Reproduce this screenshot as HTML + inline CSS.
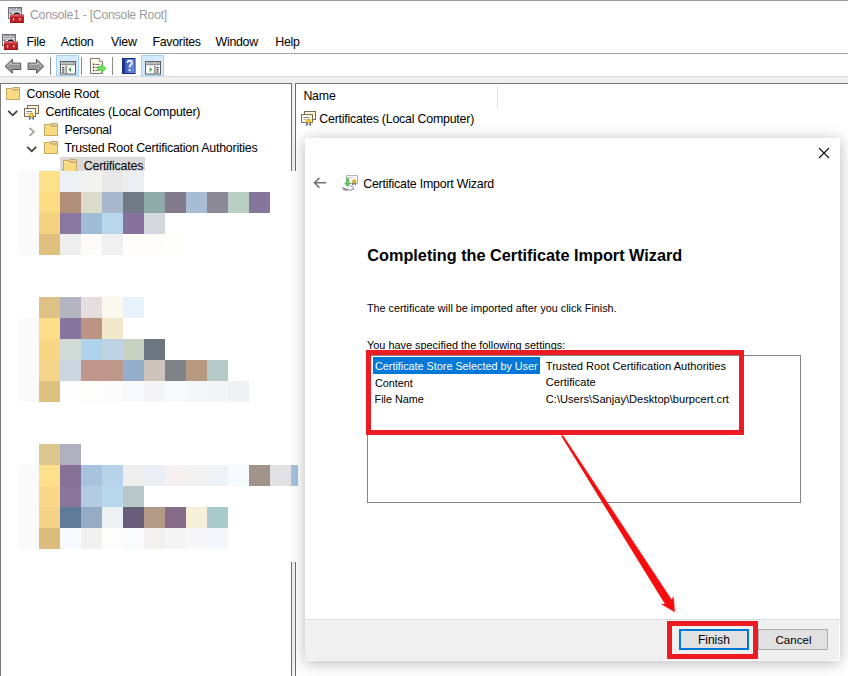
<!DOCTYPE html>
<html><head><meta charset="utf-8"><style>
html,body{margin:0;padding:0;}
body{width:848px;height:676px;position:relative;overflow:hidden;background:#fff;font-family:"Liberation Sans", sans-serif;}
.t{position:absolute;white-space:nowrap;}
.r{position:absolute;}
svg{position:absolute;overflow:visible;}
</style></head><body>
<div class="r" style="left:0px;top:0px;width:848px;height:1px;background:#a0a0a0;"></div>
<div class="t" style="left:30px;top:9.29px;font-size:12.3px;line-height:12.3px;color:#9c9c9c;font-weight:400;letter-spacing:-0.29px;">Console1 - [Console Root]</div>
<div class="t" style="left:26.5px;top:35.50px;font-size:12.4px;line-height:12.4px;color:#000;font-weight:400;letter-spacing:-0.3px;">File</div>
<div class="t" style="left:60.7px;top:35.50px;font-size:12.4px;line-height:12.4px;color:#000;font-weight:400;letter-spacing:-0.3px;">Action</div>
<div class="t" style="left:111.1px;top:35.50px;font-size:12.4px;line-height:12.4px;color:#000;font-weight:400;letter-spacing:-0.3px;">View</div>
<div class="t" style="left:152.5px;top:35.50px;font-size:12.4px;line-height:12.4px;color:#000;font-weight:400;letter-spacing:-0.3px;">Favorites</div>
<div class="t" style="left:215.6px;top:35.50px;font-size:12.4px;line-height:12.4px;color:#000;font-weight:400;letter-spacing:-0.3px;">Window</div>
<div class="t" style="left:275.3px;top:35.50px;font-size:12.4px;line-height:12.4px;color:#000;font-weight:400;letter-spacing:-0.3px;">Help</div>
<div class="r" style="left:0px;top:53px;width:848px;height:1px;background:#a5a5a5;"></div>
<div class="r" style="left:0px;top:76px;width:848px;height:1px;background:#dadada;"></div>
<div class="r" style="left:0px;top:77px;width:848px;height:6px;background:#f0f0f0;"></div>
<div class="r" style="left:0px;top:83px;width:848px;height:1px;background:#747474;"></div>
<div class="r" style="left:0px;top:83px;width:1px;height:593px;background:#7a7a7a;"></div>
<div class="r" style="left:292px;top:83px;width:3px;height:88px;background:#f0f0f2;"></div>
<div class="r" style="left:292px;top:562px;width:3px;height:114px;background:#f0f0f2;"></div>
<div class="r" style="left:291px;top:83px;width:1px;height:88px;background:#6e6e6e;"></div>
<div class="r" style="left:295px;top:83px;width:1px;height:88px;background:#6e6e6e;"></div>
<div class="r" style="left:291px;top:562px;width:1px;height:114px;background:#6e6e6e;"></div>
<div class="r" style="left:295px;top:562px;width:1px;height:114px;background:#6e6e6e;"></div>
<div class="r" style="left:497px;top:86px;width:1px;height:22px;background:#e5e5e5;"></div>
<div class="r" style="left:56px;top:55px;width:23px;height:21px;background:#d3ebfc;box-shadow:inset 0 0 0 1px #a4d3f6;"></div>
<div class="r" style="left:141px;top:55px;width:23px;height:21px;background:#d3ebfc;box-shadow:inset 0 0 0 1px #a4d3f6;"></div>
<div class="r" style="left:50px;top:57px;width:1px;height:18px;background:#8a8a8a;"></div>
<div class="r" style="left:81px;top:57px;width:1px;height:18px;background:#8a8a8a;"></div>
<div class="r" style="left:112px;top:57px;width:1px;height:18px;background:#8a8a8a;"></div>
<div class="t" style="left:26.6px;top:87.50px;font-size:12.4px;line-height:12.4px;color:#000;font-weight:400;letter-spacing:-0.22px;">Console Root</div>
<div class="t" style="left:45.5px;top:105.50px;font-size:12.4px;line-height:12.4px;color:#000;font-weight:400;letter-spacing:-0.22px;">Certificates (Local Computer)</div>
<div class="t" style="left:64.4px;top:123.50px;font-size:12.4px;line-height:12.4px;color:#000;font-weight:400;letter-spacing:-0.22px;">Personal</div>
<div class="t" style="left:64.4px;top:141.50px;font-size:12.4px;line-height:12.4px;color:#000;font-weight:400;letter-spacing:-0.22px;">Trusted Root Certification Authorities</div>
<div class="r" style="left:60px;top:157px;width:85px;height:14px;background:#d9d9d9;"></div>
<div class="t" style="left:83.8px;top:159.50px;font-size:12.4px;line-height:12.4px;color:#000;font-weight:400;letter-spacing:-0.22px;">Certificates</div>
<div class="t" style="left:303.4px;top:90.10px;font-size:12.4px;line-height:12.4px;color:#000;font-weight:400;letter-spacing:-0.22px;">Name</div>
<div class="t" style="left:319.3px;top:112.70px;font-size:12.4px;line-height:12.4px;color:#000;font-weight:400;letter-spacing:-0.22px;">Certificates (Local Computer)</div>
<svg style="left:0;top:0" width="848" height="676" viewBox="0 0 848 676"><g transform="translate(0,0)">
<rect x="8.5" y="7.5" width="13" height="11" fill="#fff" stroke="#70707a" stroke-width="1"/>
<rect x="9" y="8" width="12" height="1.6" fill="#d4d4dc"/>
<rect x="9.5" y="8.3" width="6.5" height="1" fill="#8a8a96"/>
<rect x="17.5" y="8.2" width="1.2" height="1.2" fill="#55555f"/><rect x="19.5" y="8.2" width="1.2" height="1.2" fill="#55555f"/>
<rect x="9" y="9.8" width="12" height="0.8" fill="#70707a"/>
<rect x="9" y="10.8" width="12" height="1" fill="#c8c8d4"/>
<rect x="9" y="12" width="12" height="0.6" fill="#9a9aa6"/>
<rect x="9.6" y="12.8" width="1.2" height="1.2" fill="#333"/>
<rect x="11.6" y="12.2" width="0.7" height="6" fill="#70707a"/>
<path d="M13.6,14.8 Q16.8,11.6 20,14.8" fill="none" stroke="#111" stroke-width="1.5"/>
<rect x="10" y="14.6" width="14" height="8.4" rx="0.6" fill="#bb2228"/>
<rect x="10.3" y="14.8" width="13.4" height="1.6" fill="#d85a60"/>
<rect x="12.9" y="18.2" width="1.3" height="2.2" fill="#f6d8b0"/>
<rect x="19.1" y="18.2" width="1.3" height="2.2" fill="#f6d8b0"/>
<rect x="10" y="22.2" width="14" height="0.8" fill="#8e1519"/>
</g><g transform="translate(-6,27)">
<rect x="8.5" y="7.5" width="13" height="11" fill="#fff" stroke="#70707a" stroke-width="1"/>
<rect x="9" y="8" width="12" height="1.6" fill="#d4d4dc"/>
<rect x="9.5" y="8.3" width="6.5" height="1" fill="#8a8a96"/>
<rect x="17.5" y="8.2" width="1.2" height="1.2" fill="#55555f"/><rect x="19.5" y="8.2" width="1.2" height="1.2" fill="#55555f"/>
<rect x="9" y="9.8" width="12" height="0.8" fill="#70707a"/>
<rect x="9" y="10.8" width="12" height="1" fill="#c8c8d4"/>
<rect x="9" y="12" width="12" height="0.6" fill="#9a9aa6"/>
<rect x="9.6" y="12.8" width="1.2" height="1.2" fill="#333"/>
<rect x="11.6" y="12.2" width="0.7" height="6" fill="#70707a"/>
<path d="M13.6,14.8 Q16.8,11.6 20,14.8" fill="none" stroke="#111" stroke-width="1.5"/>
<rect x="10" y="14.6" width="14" height="8.4" rx="0.6" fill="#bb2228"/>
<rect x="10.3" y="14.8" width="13.4" height="1.6" fill="#d85a60"/>
<rect x="12.9" y="18.2" width="1.3" height="2.2" fill="#f6d8b0"/>
<rect x="19.1" y="18.2" width="1.3" height="2.2" fill="#f6d8b0"/>
<rect x="10" y="22.2" width="14" height="0.8" fill="#8e1519"/>
</g><path d="M5,66.4 L12.3,59.3 L12.3,63.1 L20.7,63.1 L20.7,69.5 L12.3,69.5 L12.3,73.3 Z" fill="#979797" stroke="#555" stroke-width="1" stroke-linejoin="round"/><path d="M7,66.4 L11.2,62.3 L11.2,64.2 L19.5,64.2" fill="none" stroke="#d5d5d5" stroke-width="0.8"/><g transform="translate(48.8,0) scale(-1,1)"><path d="M5,66.4 L12.3,59.3 L12.3,63.1 L20.7,63.1 L20.7,69.5 L12.3,69.5 L12.3,73.3 Z" fill="#979797" stroke="#555" stroke-width="1" stroke-linejoin="round"/><path d="M7,66.4 L11.2,62.3 L11.2,64.2 L19.5,64.2" fill="none" stroke="#d5d5d5" stroke-width="0.8"/></g><rect x="60.5" y="61.5" width="15" height="12.5" fill="#fff" stroke="#5f5f5f" stroke-width="1"/>
<rect x="61" y="62" width="14" height="2" fill="#e6e6e6"/>
<rect x="61.8" y="62.5" width="8.5" height="1" fill="#8a8a8a"/>
<rect x="71.3" y="62.4" width="1.2" height="1.2" fill="#5a5a5a"/><rect x="73.1" y="62.4" width="1.2" height="1.2" fill="#5a5a5a"/>
<rect x="61" y="64" width="14" height="0.8" fill="#6a6a6a"/>
<rect x="61" y="64.8" width="14" height="0.7" fill="#d0d0d0"/>
<rect x="62" y="67" width="2.4" height="1.3" fill="#444"/><rect x="62" y="69.2" width="2.4" height="1.3" fill="#444"/><rect x="62" y="71.4" width="2.4" height="1.3" fill="#444"/><rect x="65.6" y="65.5" width="1" height="8.5" fill="#5a5a5a"/><path d="M68.3,69.6 L71,67.2 L71,72 Z" fill="#3c9e3a"/><path d="M90.5,58.5 H99.5 L102.5,61.5 V73.5 H90.5 Z" fill="#fdf8e6" stroke="#777" stroke-width="1"/>
<path d="M99.5,58.5 V61.5 H102.5" fill="#fff" stroke="#888" stroke-width="0.8"/>
<circle cx="93.6" cy="64.4" r="0.8" fill="#333"/><circle cx="93.6" cy="67.4" r="0.8" fill="#333"/><circle cx="93.6" cy="70.5" r="0.8" fill="#333"/>
<rect x="95.2" y="64" width="4.5" height="0.9" fill="#7a6a7a"/><rect x="95.2" y="67" width="3" height="0.9" fill="#7a6a7a"/><rect x="95.2" y="70" width="3" height="0.9" fill="#7a6a7a"/>
<path d="M98,66.5 H101.8 V64.3 L106,68.5 L101.8,72.5 V70.3 H98 Z" fill="#6ee05a" stroke="#3cb030" stroke-width="0.7"/><defs><linearGradient id="hg" x1="0" x2="1"><stop offset="0" stop-color="#2c4bb0"/><stop offset="1" stop-color="#6f93ea"/></linearGradient></defs>
<rect x="122.5" y="58.5" width="12.5" height="15" fill="url(#hg)" stroke="#1c2c86" stroke-width="1"/>
<rect x="123" y="59" width="2" height="14" fill="#1f3590"/>
<path d="M127.3,62.8 Q127.5,60.6 129.6,60.6 Q131.8,60.7 131.8,62.8 Q131.8,64.3 130.4,65.2 Q129.5,65.9 129.5,67.6" fill="none" stroke="#fff" stroke-width="1.7"/>
<rect x="128.6" y="69.2" width="1.9" height="1.9" fill="#fff"/><rect x="145.5" y="61.5" width="15" height="12.5" fill="#fff" stroke="#5f5f5f" stroke-width="1"/>
<rect x="146" y="62" width="14" height="2" fill="#e6e6e6"/>
<rect x="146.8" y="62.5" width="8.5" height="1" fill="#8a8a8a"/>
<rect x="156.3" y="62.4" width="1.2" height="1.2" fill="#5a5a5a"/><rect x="158.1" y="62.4" width="1.2" height="1.2" fill="#5a5a5a"/>
<rect x="146" y="64" width="14" height="0.8" fill="#6a6a6a"/>
<rect x="146" y="64.8" width="14" height="0.7" fill="#d0d0d0"/>
<rect x="156.3" y="67" width="2.4" height="1.3" fill="#444"/><rect x="156.3" y="69.2" width="2.4" height="1.3" fill="#444"/><rect x="156.3" y="71.4" width="2.4" height="1.3" fill="#444"/><rect x="154.4" y="65.5" width="1" height="8.5" fill="#5a5a5a"/><path d="M149.6,67.2 L152.3,69.6 L149.6,72 Z" fill="#3c9e3a"/><g transform="translate(6,87)">
<path d="M6.8,0.5 H13.5 V3 H6.8 Z" fill="#efd7a0" stroke="#bfa66a" stroke-width="1"/>
<path d="M0.5,1.5 H5.5 L7,3.2 H13.5 V12.5 H0.5 Z" fill="#fadf8f" stroke="#c2a862" stroke-width="1"/>
<rect x="1.2" y="4" width="11.6" height="8" fill="#f9da80"/>
</g><g transform="translate(0,0)">
<rect x="27.5" y="105.5" width="11" height="8" fill="#fdf5da" stroke="#7d6c5a" stroke-width="1"/>
<rect x="24.5" y="108.5" width="11" height="8" fill="#fffbea" stroke="#7d6c5a" stroke-width="1"/>
<rect x="26.5" y="111" width="5.5" height="1" fill="#7a7f9a"/>
<rect x="26.5" y="113" width="2.5" height="0.8" fill="#a0a4b8"/>
<path d="M29.6,116.5 L29,120 L30.6,119 L31,116.5 Z M32.3,116.5 L32.7,120 L34,119 L33.5,116.5 Z" fill="#24408f"/>
<circle cx="31.5" cy="115.2" r="2.4" fill="#e0a416"/>
<circle cx="31.5" cy="115" r="1.2" fill="#f7d04a"/>
</g><g transform="translate(44,123)">
<path d="M6.8,0.5 H13.5 V3 H6.8 Z" fill="#efd7a0" stroke="#bfa66a" stroke-width="1"/>
<path d="M0.5,1.5 H5.5 L7,3.2 H13.5 V12.5 H0.5 Z" fill="#fadf8f" stroke="#c2a862" stroke-width="1"/>
<rect x="1.2" y="4" width="11.6" height="8" fill="#f9da80"/>
</g><g transform="translate(44,141)">
<path d="M6.8,0.5 H13.5 V3 H6.8 Z" fill="#efd7a0" stroke="#bfa66a" stroke-width="1"/>
<path d="M0.5,1.5 H5.5 L7,3.2 H13.5 V12.5 H0.5 Z" fill="#fadf8f" stroke="#c2a862" stroke-width="1"/>
<rect x="1.2" y="4" width="11.6" height="8" fill="#f9da80"/>
</g><g transform="translate(63,159)">
<path d="M6.8,0.5 H13.5 V3 H6.8 Z" fill="#efd7a0" stroke="#bfa66a" stroke-width="1"/>
<path d="M0.5,1.5 H5.5 L7,3.2 H13.5 V12.5 H0.5 Z" fill="#fadf8f" stroke="#c2a862" stroke-width="1"/>
<rect x="1.2" y="4" width="11.6" height="8" fill="#f9da80"/>
</g><path d="M8.2,110.8 L12.7,115.3 L17.2,110.8" fill="none" stroke="#404040" stroke-width="1.8"/><path d="M29.5,127.8 L34.0,131.8 L29.5,135.8" fill="none" stroke="#a0a0a0" stroke-width="1.7"/><path d="M27.2,146.8 L31.7,151.3 L36.2,146.8" fill="none" stroke="#404040" stroke-width="1.8"/><g transform="translate(277,6)">
<rect x="27.5" y="105.5" width="11" height="8" fill="#fdf5da" stroke="#7d6c5a" stroke-width="1"/>
<rect x="24.5" y="108.5" width="11" height="8" fill="#fffbea" stroke="#7d6c5a" stroke-width="1"/>
<rect x="26.5" y="111" width="5.5" height="1" fill="#7a7f9a"/>
<rect x="26.5" y="113" width="2.5" height="0.8" fill="#a0a4b8"/>
<path d="M29.6,116.5 L29,120 L30.6,119 L31,116.5 Z M32.3,116.5 L32.7,120 L34,119 L33.5,116.5 Z" fill="#24408f"/>
<circle cx="31.5" cy="115.2" r="2.4" fill="#e0a416"/>
<circle cx="31.5" cy="115" r="1.2" fill="#f7d04a"/>
</g></svg>
<div class="r" style="left:18px;top:171px;width:21px;height:21px;background:#fafafa;"></div>
<div class="r" style="left:18px;top:192px;width:21px;height:21px;background:#fafafa;"></div>
<div class="r" style="left:18px;top:213px;width:21px;height:21px;background:#fafafa;"></div>
<div class="r" style="left:18px;top:234px;width:21px;height:21px;background:#fafafa;"></div>
<div class="r" style="left:18px;top:318px;width:21px;height:21px;background:#fafafa;"></div>
<div class="r" style="left:18px;top:339px;width:21px;height:21px;background:#fafafa;"></div>
<div class="r" style="left:18px;top:360px;width:21px;height:21px;background:#fafafa;"></div>
<div class="r" style="left:18px;top:381px;width:21px;height:21px;background:#fafafa;"></div>
<div class="r" style="left:18px;top:465px;width:21px;height:21px;background:#fafafa;"></div>
<div class="r" style="left:18px;top:486px;width:21px;height:21px;background:#fafafa;"></div>
<div class="r" style="left:18px;top:507px;width:21px;height:21px;background:#fafafa;"></div>
<div class="r" style="left:18px;top:528px;width:21px;height:21px;background:#fafafa;"></div>
<div class="r" style="left:39px;top:171px;width:21px;height:21px;background:#fde08a;"></div>
<div class="r" style="left:60px;top:171px;width:21px;height:21px;background:#edf2f6;"></div>
<div class="r" style="left:81px;top:171px;width:21px;height:21px;background:#f5f3f0;"></div>
<div class="r" style="left:102px;top:171px;width:21px;height:21px;background:#e9e9ea;"></div>
<div class="r" style="left:123px;top:171px;width:21px;height:21px;background:#eceff2;"></div>
<div class="r" style="left:39px;top:192px;width:21px;height:21px;background:#fcdb85;"></div>
<div class="r" style="left:60px;top:192px;width:21px;height:21px;background:#b08e7a;"></div>
<div class="r" style="left:81px;top:192px;width:21px;height:21px;background:#dcdccb;"></div>
<div class="r" style="left:102px;top:192px;width:21px;height:21px;background:#a8b8cc;"></div>
<div class="r" style="left:123px;top:192px;width:21px;height:21px;background:#6f7a85;"></div>
<div class="r" style="left:144px;top:192px;width:21px;height:21px;background:#8eaaa8;"></div>
<div class="r" style="left:165px;top:192px;width:21px;height:21px;background:#817b8c;"></div>
<div class="r" style="left:186px;top:192px;width:21px;height:21px;background:#a7bdd3;"></div>
<div class="r" style="left:207px;top:192px;width:21px;height:21px;background:#8c8a96;"></div>
<div class="r" style="left:228px;top:192px;width:21px;height:21px;background:#b9cfc3;"></div>
<div class="r" style="left:249px;top:192px;width:21px;height:21px;background:#86769a;"></div>
<div class="r" style="left:39px;top:213px;width:21px;height:21px;background:#f6d17f;"></div>
<div class="r" style="left:60px;top:213px;width:21px;height:21px;background:#8a77a0;"></div>
<div class="r" style="left:81px;top:213px;width:21px;height:21px;background:#9fbdd6;"></div>
<div class="r" style="left:102px;top:213px;width:21px;height:21px;background:#b8d6ec;"></div>
<div class="r" style="left:123px;top:213px;width:21px;height:21px;background:#86729c;"></div>
<div class="r" style="left:144px;top:213px;width:21px;height:21px;background:#d5d8df;"></div>
<div class="r" style="left:39px;top:234px;width:21px;height:21px;background:#dfc07f;"></div>
<div class="r" style="left:60px;top:234px;width:21px;height:21px;background:#eeeeef;"></div>
<div class="r" style="left:81px;top:234px;width:21px;height:21px;background:#fdfbf7;"></div>
<div class="r" style="left:102px;top:234px;width:21px;height:21px;background:#f0f0f2;"></div>
<div class="r" style="left:123px;top:234px;width:21px;height:21px;background:#fefdf9;"></div>
<div class="r" style="left:144px;top:234px;width:21px;height:21px;background:#fefdf7;"></div>
<div class="r" style="left:165px;top:234px;width:21px;height:21px;background:#fefefa;"></div>
<div class="r" style="left:39px;top:297px;width:21px;height:21px;background:#dcc385;"></div>
<div class="r" style="left:60px;top:297px;width:21px;height:21px;background:#b5b5c2;"></div>
<div class="r" style="left:81px;top:297px;width:21px;height:21px;background:#e6dede;"></div>
<div class="r" style="left:102px;top:297px;width:21px;height:21px;background:#fbf9ee;"></div>
<div class="r" style="left:123px;top:297px;width:21px;height:21px;background:#e8f2fa;"></div>
<div class="r" style="left:39px;top:318px;width:21px;height:21px;background:#fdde88;"></div>
<div class="r" style="left:60px;top:318px;width:21px;height:21px;background:#86769d;"></div>
<div class="r" style="left:81px;top:318px;width:21px;height:21px;background:#bb9484;"></div>
<div class="r" style="left:102px;top:318px;width:21px;height:21px;background:#f2e8cb;"></div>
<div class="r" style="left:39px;top:339px;width:21px;height:21px;background:#f8d683;"></div>
<div class="r" style="left:60px;top:339px;width:21px;height:21px;background:#d2dcd9;"></div>
<div class="r" style="left:81px;top:339px;width:21px;height:21px;background:#b0d3ec;"></div>
<div class="r" style="left:102px;top:339px;width:21px;height:21px;background:#bfd2e4;"></div>
<div class="r" style="left:123px;top:339px;width:21px;height:21px;background:#c7d2c2;"></div>
<div class="r" style="left:144px;top:339px;width:21px;height:21px;background:#6d7580;"></div>
<div class="r" style="left:39px;top:360px;width:21px;height:21px;background:#f4d38a;"></div>
<div class="r" style="left:60px;top:360px;width:21px;height:21px;background:#ccd6e0;"></div>
<div class="r" style="left:81px;top:360px;width:21px;height:21px;background:#be968a;"></div>
<div class="r" style="left:102px;top:360px;width:21px;height:21px;background:#be968a;"></div>
<div class="r" style="left:123px;top:360px;width:21px;height:21px;background:#93aecb;"></div>
<div class="r" style="left:144px;top:360px;width:21px;height:21px;background:#cdc4bb;"></div>
<div class="r" style="left:165px;top:360px;width:21px;height:21px;background:#80828a;"></div>
<div class="r" style="left:186px;top:360px;width:21px;height:21px;background:#b89a82;"></div>
<div class="r" style="left:207px;top:360px;width:21px;height:21px;background:#b5cac6;"></div>
<div class="r" style="left:39px;top:381px;width:21px;height:21px;background:#dcc07e;"></div>
<div class="r" style="left:60px;top:381px;width:21px;height:21px;background:#fefefe;"></div>
<div class="r" style="left:81px;top:381px;width:21px;height:21px;background:#fdfdfb;"></div>
<div class="r" style="left:102px;top:381px;width:21px;height:21px;background:#fcfcfd;"></div>
<div class="r" style="left:123px;top:381px;width:21px;height:21px;background:#f8f9fc;"></div>
<div class="r" style="left:144px;top:381px;width:21px;height:21px;background:#f5f5f7;"></div>
<div class="r" style="left:165px;top:381px;width:21px;height:21px;background:#f9fafc;"></div>
<div class="r" style="left:186px;top:381px;width:21px;height:21px;background:#f5f6f8;"></div>
<div class="r" style="left:207px;top:381px;width:21px;height:21px;background:#f4f5f7;"></div>
<div class="r" style="left:228px;top:381px;width:21px;height:21px;background:#f0f1f3;"></div>
<div class="r" style="left:39px;top:444px;width:21px;height:21px;background:#dcc78e;"></div>
<div class="r" style="left:60px;top:444px;width:21px;height:21px;background:#b0afbf;"></div>
<div class="r" style="left:39px;top:465px;width:21px;height:21px;background:#fde08a;"></div>
<div class="r" style="left:60px;top:465px;width:21px;height:21px;background:#877198;"></div>
<div class="r" style="left:81px;top:465px;width:21px;height:21px;background:#a6c2dc;"></div>
<div class="r" style="left:102px;top:465px;width:21px;height:21px;background:#b6d3e9;"></div>
<div class="r" style="left:123px;top:465px;width:21px;height:21px;background:#eeeeee;"></div>
<div class="r" style="left:144px;top:465px;width:21px;height:21px;background:#ebeef5;"></div>
<div class="r" style="left:165px;top:465px;width:21px;height:21px;background:#f6f1f0;"></div>
<div class="r" style="left:186px;top:465px;width:21px;height:21px;background:#f2f2f2;"></div>
<div class="r" style="left:207px;top:465px;width:21px;height:21px;background:#eef3f5;"></div>
<div class="r" style="left:228px;top:465px;width:21px;height:21px;background:#f5fafd;"></div>
<div class="r" style="left:249px;top:465px;width:21px;height:21px;background:#a0938a;"></div>
<div class="r" style="left:270px;top:465px;width:21px;height:21px;background:#e2e2e6;"></div>
<div class="r" style="left:291px;top:465px;width:7px;height:21px;background:#a4c2dc;"></div>
<div class="r" style="left:39px;top:486px;width:21px;height:21px;background:#fbd887;"></div>
<div class="r" style="left:60px;top:486px;width:21px;height:21px;background:#8a759c;"></div>
<div class="r" style="left:81px;top:486px;width:21px;height:21px;background:#b3cce2;"></div>
<div class="r" style="left:102px;top:486px;width:21px;height:21px;background:#b9d8ee;"></div>
<div class="r" style="left:123px;top:486px;width:21px;height:21px;background:#b6c8c9;"></div>
<div class="r" style="left:39px;top:507px;width:21px;height:21px;background:#f5d285;"></div>
<div class="r" style="left:60px;top:507px;width:21px;height:21px;background:#5f7a9b;"></div>
<div class="r" style="left:81px;top:507px;width:21px;height:21px;background:#98abc4;"></div>
<div class="r" style="left:102px;top:507px;width:21px;height:21px;background:#edf1f4;"></div>
<div class="r" style="left:123px;top:507px;width:21px;height:21px;background:#675e79;"></div>
<div class="r" style="left:144px;top:507px;width:21px;height:21px;background:#b39a86;"></div>
<div class="r" style="left:165px;top:507px;width:21px;height:21px;background:#866b88;"></div>
<div class="r" style="left:186px;top:507px;width:21px;height:21px;background:#f6f0d9;"></div>
<div class="r" style="left:207px;top:507px;width:21px;height:21px;background:#a9cacb;"></div>
<div class="r" style="left:39px;top:528px;width:21px;height:21px;background:#dbbc7c;"></div>
<div class="r" style="left:60px;top:528px;width:21px;height:21px;background:#f7f9fc;"></div>
<div class="r" style="left:81px;top:528px;width:21px;height:21px;background:#f1f1f2;"></div>
<div class="r" style="left:102px;top:528px;width:21px;height:21px;background:#fdfdfc;"></div>
<div class="r" style="left:123px;top:528px;width:21px;height:21px;background:#fafbfc;"></div>
<div class="r" style="left:144px;top:528px;width:21px;height:21px;background:#f3f2f1;"></div>
<div class="r" style="left:165px;top:528px;width:21px;height:21px;background:#f5f5f5;"></div>
<div class="r" style="left:186px;top:528px;width:21px;height:21px;background:#f7f7f9;"></div>
<div class="r" style="left:207px;top:528px;width:21px;height:21px;background:#f5f7fa;"></div>
<div class="r" style="left:305px;top:138px;width:535px;height:523px;background:#fff;box-shadow:0 2px 14px rgba(0,0,0,0.28);"></div>
<div class="r" style="left:305px;top:619px;width:535px;height:42px;background:#f0f0f0;"></div>
<div class="r" style="left:305px;top:619px;width:535px;height:1px;background:#dcdcdc;"></div>
<div class="r" style="left:305px;top:620px;width:535px;height:1px;background:#f4f4f4;"></div>
<div class="r" style="left:839px;top:620px;width:1px;height:41px;background:#fbfbfb;"></div>
<div class="r" style="left:305px;top:660px;width:535px;height:1px;background:#fbfbfb;"></div>
<div class="t" style="left:363.2px;top:177.80px;font-size:12.4px;line-height:12.4px;color:#000;font-weight:400;letter-spacing:-0.22px;">Certificate Import Wizard</div>
<div class="t" style="left:367.3px;top:246.54px;font-size:16.25px;line-height:16.25px;color:#000;font-weight:700;">Completing the Certificate Import Wizard</div>
<div class="t" style="left:367px;top:303.06px;font-size:10.8px;line-height:10.8px;color:#000;font-weight:400;">The certificate will be imported after you click Finish.</div>
<div class="t" style="left:367px;top:340.37px;font-size:10.9px;line-height:10.9px;color:#000;font-weight:400;">You have specified the following settings:</div>
<div class="r" style="left:367px;top:355px;width:434px;height:148px;background:#fff;box-shadow:inset 0 0 0 1px #858585;"></div>
<div class="r" style="left:373px;top:357px;width:167px;height:17px;background:#0078d7;"></div>
<div class="t" style="left:375px;top:360.86px;font-size:10.8px;line-height:10.8px;color:#fff;font-weight:400;">Certificate Store Selected by User</div>
<div class="t" style="left:375px;top:377.56px;font-size:10.8px;line-height:10.8px;color:#000;font-weight:400;">Content</div>
<div class="t" style="left:374.6px;top:394.46px;font-size:10.8px;line-height:10.8px;color:#000;font-weight:400;">File Name</div>
<div class="t" style="left:545.8px;top:360.60px;font-size:11.1px;line-height:11.1px;color:#000;font-weight:400;">Trusted Root Certification Authorities</div>
<div class="t" style="left:545.8px;top:377.30px;font-size:11.1px;line-height:11.1px;color:#000;font-weight:400;">Certificate</div>
<div class="t" style="left:545.8px;top:394.20px;font-size:11.1px;line-height:11.1px;color:#000;font-weight:400;">C:\Users\Sanjay\Desktop\burpcert.crt</div>
<div class="r" style="left:366px;top:350px;width:378px;height:85px;background:transparent;box-shadow:inset 0 0 0 5px #ec1c24;"></div>
<div class="r" style="left:679px;top:629px;width:70px;height:21px;background:#e1e1e1;box-shadow:inset 0 0 0 2px #0078d7;"></div>
<div class="t" style="left:697.9px;top:633.84px;font-size:12px;line-height:12px;color:#000;font-weight:400;">Finish</div>
<div class="r" style="left:758px;top:629px;width:70px;height:21px;background:#e1e1e1;box-shadow:inset 0 0 0 1px #adadad;"></div>
<div class="t" style="left:775.4px;top:634.18px;font-size:11.6px;line-height:11.6px;color:#000;font-weight:400;">Cancel</div>
<div class="r" style="left:667px;top:621px;width:91px;height:38px;background:transparent;box-shadow:inset 0 0 0 5px #ec1c24;"></div>
<svg style="left:0;top:0" width="848" height="676" viewBox="0 0 848 676"><defs><filter id="blur1"><feGaussianBlur stdDeviation="1"/></filter></defs><path d="M314.5,182.8 H326 M319.5,177.8 L314.5,182.8 L319.5,187.8" fill="none" stroke="#707070" stroke-width="1.6"/><rect x="346.5" y="175.5" width="11" height="8" fill="#fafafa" stroke="#b4b4b4" stroke-width="1"/>
<rect x="348" y="177" width="4.5" height="1" fill="#d0d0d0"/>
<path d="M352.6,182.6 L352.3,185.4 L353.5,184.8 L353.8,182.6 Z M354.6,182.6 L354.9,185.4 L355.9,184.6 L355.6,182.6 Z" fill="#3a3a78"/>
<circle cx="354.2" cy="181.4" r="2.1" fill="#d8ae2a"/>
<path d="M343.2,187 Q342.2,189.8 345.5,190 L351,190 Q353.6,189.6 354,187.6" fill="none" stroke="#8a8a96" stroke-width="1.2"/>
<path d="M344,188.2 Q345,189.6 348,189.4" fill="none" stroke="#555" stroke-width="0.9"/>
<path d="M350,185.6 L353.5,187" stroke="#b8a8d8" stroke-width="1.2"/>
<path d="M346.6,178.2 V183 H344.6 L347.7,186.8 L350.8,183 H348.8 V178.2 Z" fill="#62c860" stroke="#45a845" stroke-width="0.5"/><path d="M819,148 L829,158 M829,148 L819,158" stroke="#111" stroke-width="1.1"/><path d="M562.76,435.02 L671.71,599.73 L673.40,595.69 L674.80,612.00 L660.59,603.87 L664.97,604.04 L561.24,435.98 Z" fill="rgba(0,0,0,0.18)" transform="translate(1.5,1.5)" filter="url(#blur1)"/><path d="M562.76,435.02 L671.71,599.73 L673.40,595.69 L674.80,612.00 L660.59,603.87 L664.97,604.04 L561.24,435.98 Z" fill="#f70d0d"/></svg>
</body></html>
